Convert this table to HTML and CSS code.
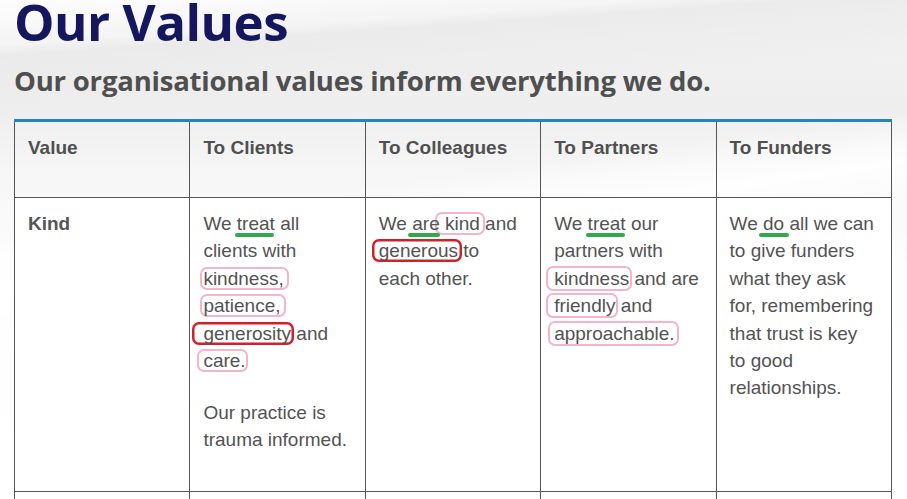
FILE: index.html
```html
<!DOCTYPE html>
<html lang="en">
<head>
<meta charset="utf-8">
<title>Our Values</title>
<link rel="stylesheet" href="styles.css">
</head>
<body>
<main class="page">
  <h1 class="title">Our Values</h1>
  <h2 class="subtitle">Our organisational values inform everything we do.</h2>
  <table class="values">
    <thead>
      <tr>
        <th>Value</th>
        <th>To Clients</th>
        <th>To Colleagues</th>
        <th>To Partners</th>
        <th>To Funders</th>
      </tr>
    </thead>
    <tbody>
      <tr>
        <td class="name">Kind</td>
        <td>
          <p>We <span class="u">treat</span> all clients with <span class="hl pink hl-c1">kindness,</span> <span class="hl pink hl-c2">patience,</span> <span class="hl red hl-gen">generosity</span> and <span class="hl pink hl-care">care.</span></p>
          <p>Our practice is trauma informed.</p>
        </td>
        <td>
          <p>We<span class="u u-are"> are</span> <span class="hl pink hl-kind">kind</span> and <span class="hl red hl-gous">generous</span> to each other.</p>
        </td>
        <td>
          <p>We <span class="u">treat</span> our partners with <span class="hl pink hl-p1">kindness</span> and are <span class="hl pink hl-p1">friendly</span> and <span class="hl pink hl-p2">approachable.</span></p>
        </td>
        <td>
          <p>We<span class="u u-do"> do </span>all we can to give funders what they ask for, remembering that trust is key to good relationships.</p>
        </td>
      </tr>
      <tr class="next">
        <td></td><td></td><td></td><td></td><td></td>
      </tr>
    </tbody>
  </table>
</main>
</body>
</html>
```

FILE: styles.css
```css
html, body {
  margin: 0;
  padding: 0;
}
body {
  height: 499px;
  overflow: hidden;
  background-color: #fbfbfb;
  background-image:
    linear-gradient(172deg, rgba(255,255,255,0) 0, rgba(255,255,255,0) 38%, rgba(255,255,255,0.9) 46%, rgba(255,255,255,0) 56%),
    linear-gradient(176deg, rgba(255,255,255,0.85) 0, rgba(255,255,255,0.2) 8%, rgba(232,232,232,0.7) 10%, rgba(245,245,245,0) 22%),
    linear-gradient(to bottom, #f3f3f3 0, #eeeeee 110px, #f6f6f6 170px, #fdfdfd 260px, #ffffff 100%);
  font-family: "Liberation Sans", Arial, sans-serif;
}
.page {
  padding: 0 15px 0 14px;
}
.title {
  margin: -5px 0 0;
  font-family: "Open Sans", sans-serif;
  font-weight: 700;
  font-size: 51px;
  line-height: 52px;
  color: #14175d;
  letter-spacing: -0.5px;
}
.subtitle {
  margin: 16px 0 0;
  font-family: "Open Sans", sans-serif;
  font-weight: 700;
  font-size: 27.5px;
  line-height: 36px;
  color: #4f4f4f;
  letter-spacing: -0.2px;
}
.values {
  margin-top: 20px;
  width: 878px;
  table-layout: fixed;
  border-collapse: collapse;
  border-top: 3px solid #2c82b3;
  font-size: 19px;
  line-height: 27.4px;
  color: #535353;
}
.values th,
.values td {
  border: 1px solid #555;
  text-align: left;
  vertical-align: top;
}
.values thead th {
  border-top: 0;
  height: 77px;
  padding: 12px 13px 0;
  box-sizing: border-box;
  font-weight: 700;
  color: #505050;
}
.values tbody td {
  background: rgba(255,255,255,0.92);
  padding: 12px 16px 13px 13px;
}
.values tbody td.name {
  font-weight: 700;
  color: #555;
}
.values p {
  margin: 0 0 24.6px;
}
.values tr.next td {
  height: 40px;
}
.u {
  position: relative;
}
.u::after {
  content: "";
  position: absolute;
  left: -2px;
  right: 1px;
  bottom: -3px;
  height: 4px;
  border-radius: 2px;
  background: #2fa84f;
}
.u-are::after { left: 1px; right: 0; }
.u-do::after { left: 1px; right: 0; }
.hl {
  border-radius: 7px;
  padding: 1px 3px;
  margin: 0 -3px;
}
.pink { box-shadow: inset 0 0 0 2px #f4b4ca; }
.red { box-shadow: inset 0 0 0 2.5px #d21f2c; }
.hl-c1, .hl-c2 { padding-left: 3px; margin-left: -3px; padding-right: 5px; margin-right: -5px; }
.hl-gen { padding-left: 11px; margin-left: -11px; padding-right: 3px; margin-right: -3px; }
.hl-care { padding-left: 6px; margin-left: -6px; padding-right: 2px; margin-right: -2px; }
.hl-kind { padding-left: 10px; margin-left: -10px; padding-right: 5px; margin-right: -5px; }
.hl-gous { padding-left: 7px; margin-left: -7px; padding-right: 4px; margin-right: -4px; }
.hl-p1 { padding: 2px 3px 2px 8px; margin: 0 -3px 0 -8px; }
.hl-p2 { padding: 2px 4px 2px 6px; margin: 0 -4px 0 -6px; }
```
